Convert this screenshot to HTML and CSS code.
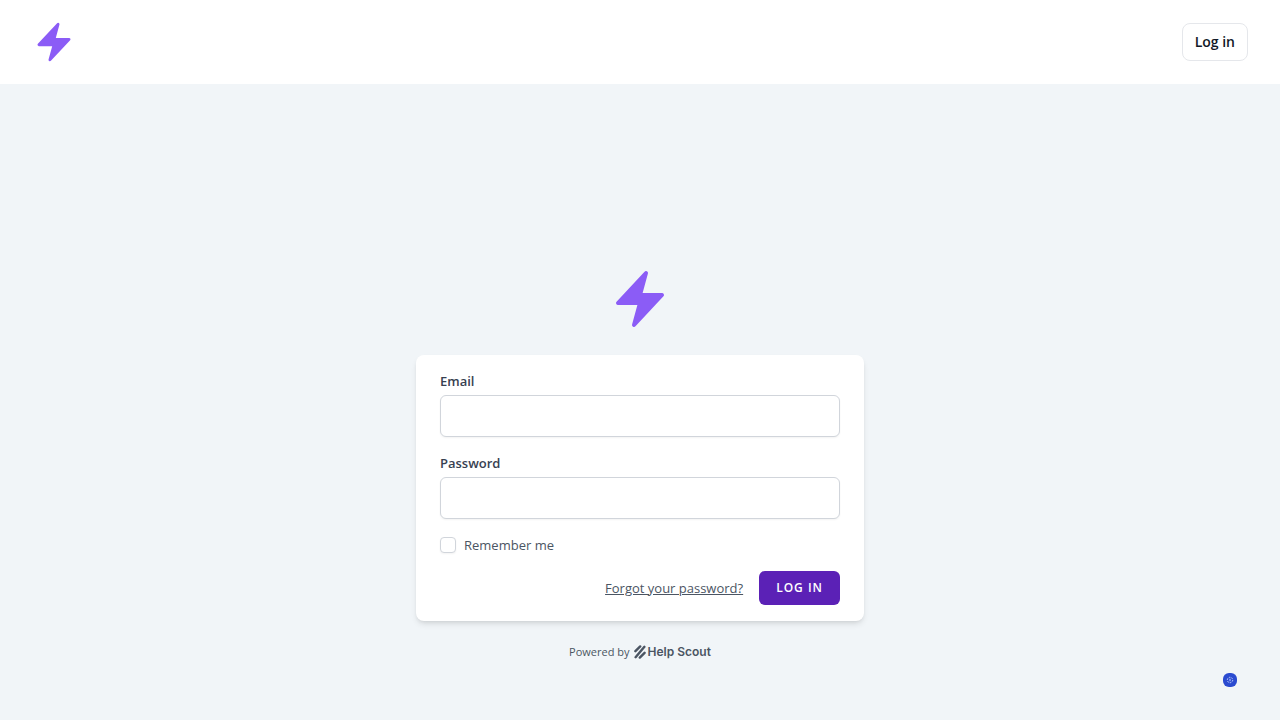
FILE: index.html
```html
<!DOCTYPE html>
<html lang="en">
<head>
    <meta charset="UTF-8">
    <meta name="viewport" content="width=device-width, initial-scale=1">
    <title>Log in</title>
    <link rel="stylesheet" href="styles.css">
</head>
<body>
    <header class="navbar">
        <a href="#" class="nav-logo" aria-label="Home">
            <svg class="bolt" viewBox="0 0 24 24" fill="currentColor" aria-hidden="true">
                <path d="M14.615 1.595a.75.75 0 0 1 .359.852L12.982 9.75h7.268a.75.75 0 0 1 .548 1.262l-10.5 11.25a.75.75 0 0 1-1.272-.71l1.992-7.302H3.75a.75.75 0 0 1-.548-1.262l10.5-11.25a.75.75 0 0 1 .913-.143z"/>
            </svg>
        </a>
        <a href="#" class="nav-login">Log in</a>
    </header>

    <main class="page">
        <a href="#" class="page-logo" aria-label="Home">
            <svg class="bolt" viewBox="0 0 24 24" fill="currentColor" aria-hidden="true">
                <path d="M14.615 1.595a.75.75 0 0 1 .359.852L12.982 9.75h7.268a.75.75 0 0 1 .548 1.262l-10.5 11.25a.75.75 0 0 1-1.272-.71l1.992-7.302H3.75a.75.75 0 0 1-.548-1.262l10.5-11.25a.75.75 0 0 1 .913-.143z"/>
            </svg>
        </a>

        <form class="card">
            <div class="field">
                <label for="email">Email</label>
                <input type="email" id="email" name="email" class="text-input">
            </div>
            <div class="field">
                <label for="password">Password</label>
                <input type="password" id="password" name="password" class="text-input">
            </div>
            <label class="remember" for="remember">
                <input type="checkbox" id="remember" name="remember">
                <span>Remember me</span>
            </label>
            <div class="actions">
                <a href="#" class="forgot">Forgot your password?</a>
                <button type="submit" class="submit">Log in</button>
            </div>
        </form>

        <footer class="powered">
            <span>Powered by</span>
            <a href="#" class="helpscout">
                <svg viewBox="0 0 12 14" fill="none" stroke="currentColor" stroke-width="2.4" stroke-linecap="round" aria-hidden="true">
                    <path d="M1.4 6.2 6.2 1.4M1.6 12.2 10.4 1.8M5.8 12.6l4.8-4.8"/>
                </svg>
                <span>Help Scout</span>
            </a>
        </footer>
    </main>

    <button type="button" class="beacon" aria-label="Help">
        <svg viewBox="0 0 14 14" fill="none" stroke="currentColor" aria-hidden="true">
            <circle cx="7" cy="7" r="2.7" stroke-dasharray="1.6 1.2"/>
            <path d="M7 5.8v2.4"/>
        </svg>
    </button>
</body>
</html>
```

FILE: styles.css
```css
:root {
    --bolt: #8b5cf6;
    --primary: #5b21b6;
    --text: #374151;
    --muted: #4b5563;
    --border: #d1d5db;
}

* {
    box-sizing: border-box;
}

body {
    margin: 0;
    font-family: "Open Sans", "Noto Sans", sans-serif;
    font-size: 13px;
    line-height: 20px;
    color: var(--text);
    background-color: #f1f5f8;
}

/* Top bar */
.navbar {
    display: flex;
    align-items: center;
    justify-content: space-between;
    height: 84px;
    padding: 0 32px;
    background-color: #fff;
}

.nav-logo,
.page-logo {
    color: var(--bolt);
}

.bolt {
    display: block;
    width: 100%;
}

.nav-logo {
    width: 44px;
}

.nav-login {
    padding: 8px 12px;
    border: 1px solid #e5e7eb;
    border-radius: 8px;
    color: #111827;
    font-size: 14px;
    font-weight: 600;
    text-decoration: none;
}

/* Login form */
.page {
    display: flex;
    flex-direction: column;
    align-items: center;
    justify-content: center;
    min-height: calc(100vh - 84px);
    padding-top: 122px;
}

.page-logo {
    width: 64px;
    margin-bottom: 24px;
}

.card {
    display: flex;
    flex-direction: column;
    gap: 16px;
    width: 100%;
    max-width: 448px;
    padding: 16px 24px;
    background-color: #fff;
    border-radius: 8px;
    box-shadow: 0 4px 6px -1px rgba(0, 0, 0, 0.1), 0 2px 4px -2px rgba(0, 0, 0, 0.1);
}

.field {
    display: flex;
    flex-direction: column;
    gap: 4px;
    font-weight: 600;
}

.text-input {
    width: 100%;
    height: 42px;
    padding: 8px 12px;
    border: 1px solid var(--border);
    border-radius: 6px;
    background-color: #fff;
    font: inherit;
    font-weight: 400;
    box-shadow: 0 1px 2px rgba(0, 0, 0, 0.05);
}

.remember {
    display: flex;
    align-items: center;
    gap: 8px;
    color: var(--muted);
}

.remember input {
    appearance: none;
    width: 16px;
    height: 16px;
    margin: 0;
    border: 1px solid var(--border);
    border-radius: 4px;
    background-color: #fff;
    box-shadow: 0 1px 2px rgba(0, 0, 0, 0.05);
}

.remember input:checked {
    background-color: var(--primary);
}

.actions {
    display: flex;
    align-items: center;
    justify-content: flex-end;
    gap: 16px;
}

.forgot {
    color: var(--muted);
}

.submit {
    padding: 8px 16px;
    border: 1px solid transparent;
    border-radius: 6px;
    background-color: var(--primary);
    color: #fff;
    font: inherit;
    font-size: 12px;
    font-weight: 600;
    line-height: 16px;
    letter-spacing: 1px;
    text-transform: uppercase;
}

/* Footer */
.powered {
    display: flex;
    align-items: center;
    gap: 4px;
    margin-top: 23px;
    font-size: 11px;
    line-height: 16px;
    color: var(--muted);
}

.helpscout {
    display: flex;
    align-items: center;
    gap: 2px;
    color: var(--muted);
    font-family: Inter, sans-serif;
    font-size: 12px;
    font-weight: 600;
    text-decoration: none;
}

.helpscout svg {
    width: 12px;
    height: 14px;
}

/* Help widget in the corner */
.beacon {
    position: fixed;
    right: 43px;
    bottom: 33px;
    width: 14px;
    height: 14px;
    padding: 0;
    border: 0;
    border-radius: 6px;
    background-color: #2b4bd0;
    color: #c7d2fe;
}

.beacon svg {
    display: block;
}
```
